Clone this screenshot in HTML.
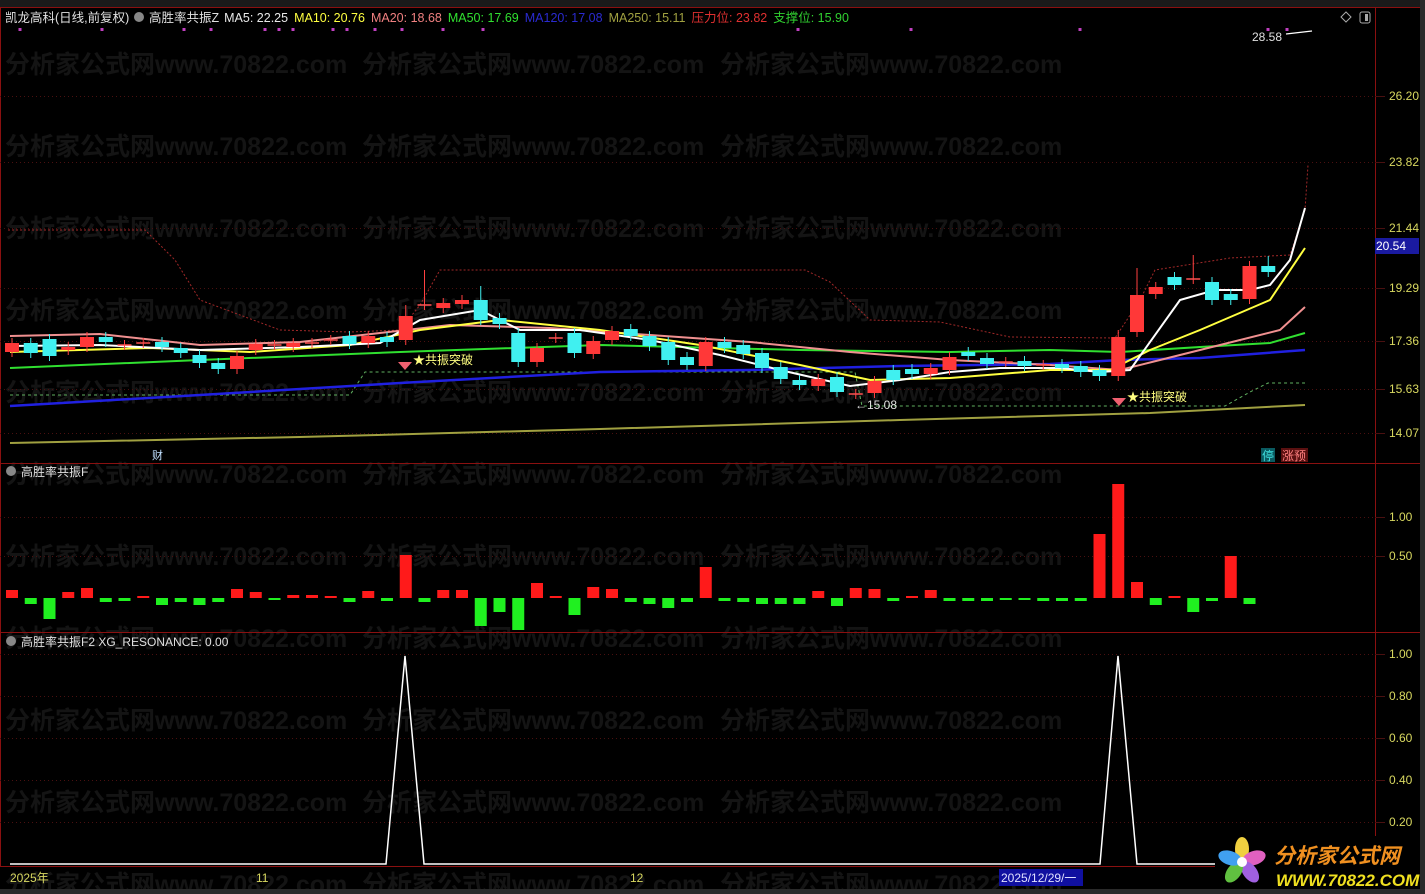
<!DOCTYPE html>
<html><head><meta charset="utf-8">
<style>
html,body{margin:0;padding:0;background:#000;width:1425px;height:894px;overflow:hidden}
svg{display:block}
text{font-family:"Liberation Sans","Noto Sans CJK SC",sans-serif}
</style></head>
<body>
<svg id="s" width="1425" height="894" xmlns="http://www.w3.org/2000/svg">
<rect width="1425" height="894" fill="#000"/>
<g id="wm" fill="#141414" font-size="25" font-weight="bold"></g>
<rect x="0" y="0" width="1425" height="7" fill="#1a1a1a"/>
<rect x="1420" y="0" width="5" height="894" fill="#2a2a2a"/>
<rect x="0" y="889" width="1425" height="5" fill="#2a2a2a"/>
<g stroke="#8a1010" stroke-width="1" fill="none">
<line x1="0" y1="7.5" x2="1420" y2="7.5"/>
<line x1="1375.5" y1="8" x2="1375.5" y2="866"/>
<line x1="0" y1="463.5" x2="1420" y2="463.5"/>
<line x1="0" y1="632.5" x2="1420" y2="632.5"/>
<line x1="0" y1="866.5" x2="1420" y2="866.5"/>
<line x1="0.5" y1="8" x2="0.5" y2="866"/>
</g>
<g id="grid" stroke="#4a1010" stroke-dasharray="1,3" stroke-width="1"></g>
<g id="axis" font-size="12" fill="#d8d860"></g>
<g id="chart"></g>
<text x="5" y="22" font-size="12.5" fill="#e0e0e0">凯龙高科(日线,前复权)</text>
<circle cx="139" cy="17" r="5" fill="#888"/>
<text x="149" y="22" font-size="12.5"><tspan fill="#e0e0e0">高胜率共振Z</tspan><tspan fill="#e8e8e8" dx="5">MA5: 22.25</tspan><tspan fill="#ffff40" dx="6">MA10: 20.76</tspan><tspan fill="#f08080" dx="6">MA20: 18.68</tspan><tspan fill="#30e030" dx="6">MA50: 17.69</tspan><tspan fill="#2a2ad0" dx="6">MA120: 17.08</tspan><tspan fill="#a0a040" dx="6">MA250: 15.11</tspan><tspan fill="#e03030" dx="6">压力位: 23.82</tspan><tspan fill="#30d030" dx="6">支撑位: 15.90</tspan></text>
<text x="1252" y="41" font-size="12" fill="#e0e0e0">28.58</text>
<path d="M1286 34 L1312 31" stroke="#fff" stroke-width="1.2"/>
<path d="M1346 12 l5 5 -5 5 -5 -5z" stroke="#aaa" fill="none"/>
<rect x="1360" y="12" width="10" height="11" rx="2" stroke="#aaa" fill="none"/><rect x="1365" y="14" width="3" height="7" fill="#aaa"/>
<circle cx="11" cy="471" r="5" fill="#888"/>
<text x="21" y="476" font-size="12" fill="#e0e0e0">高胜率共振F</text>
<circle cx="11" cy="641" r="5" fill="#888"/>
<text x="21" y="646" font-size="12" fill="#e0e0e0">高胜率共振F2  XG_RESONANCE: 0.00</text>
<text x="152" y="459" font-size="11" fill="#c0e0ff">财</text>
<rect x="1261" y="448" width="14" height="14" fill="#0a5a60"/><text x="1262" y="460" font-size="12" fill="#40e0e0">停</text>
<rect x="1281" y="448" width="27" height="14" fill="#5a1010"/><text x="1282" y="460" font-size="12" fill="#ff8080">涨预</text>
<path d="M398 362 h14 l-7 8z" fill="#f06070"/><text x="413" y="364" font-size="12" fill="#ffff80">★共振突破</text>
<path d="M1112 398 h14 l-7 8z" fill="#f06070"/><text x="1127" y="401" font-size="12" fill="#ffff80">★共振突破</text>
<text x="855" y="409" font-size="12" fill="#e0e0e0">←15.08</text>
<text x="10" y="882" font-size="12" fill="#d8d860">2025年</text>
<text x="256" y="882" font-size="12" fill="#d8d860">11</text>
<text x="630" y="882" font-size="12" fill="#d8d860">12</text>
<rect x="999" y="869" width="84" height="17" fill="#1010a0"/>
<text x="1001" y="882" font-size="12" fill="#e0e0ff">2025/12/29/一</text>
<rect x="1215" y="836" width="205" height="53" fill="#000"/>
<g transform="translate(1242,862)">
<ellipse cx="0" cy="-13" rx="7" ry="12" fill="#f0d040"/>
<ellipse cx="12" cy="-4" rx="7" ry="12" fill="#e060c0" transform="rotate(72 12 -4)"/>
<ellipse cx="8" cy="10" rx="7" ry="12" fill="#a060e0" transform="rotate(144 8 10)"/>
<ellipse cx="-8" cy="10" rx="7" ry="12" fill="#60c040" transform="rotate(216 -8 10)"/>
<ellipse cx="-12" cy="-4" rx="7" ry="12" fill="#40a0f0" transform="rotate(288 -12 -4)"/>
<circle r="5" fill="#fff"/>
</g>
<text x="1274" y="863" font-size="21" font-weight="bold" font-style="italic" fill="#f09020">分析家公式网</text>
<text x="1276" y="886" font-size="17" font-weight="bold" font-style="italic" fill="#f0e020">WWW.70822.COM</text>
</svg>
<script>
var NS="http://www.w3.org/2000/svg";
function el(p,t,a,txt){var e=document.createElementNS(NS,t);for(var k in a)e.setAttribute(k,a[k]);if(txt)e.textContent=txt;document.getElementById(p).appendChild(e);return e;}
[65,147,229,311,393,475,557,639,721,803,885].forEach(function(y){[5,362,720].forEach(function(x){el("wm","text",{x:x,y:y+8},"分析家公式网www.70822.com");});});
[[96,"26.20"],[162,"23.82"],[228,"21.44"],[288,"19.29"],[341,"17.36"],[389,"15.63"],[433,"14.07"],[517,"1.00"],[556,"0.50"],[654,"1.00"],[696,"0.80"],[738,"0.60"],[780,"0.40"],[822,"0.20"]].forEach(function(a){
 el("grid","line",{x1:0,y1:a[0]+.5,x2:1375,y2:a[0]+.5});
 el("grid","line",{x1:1375,y1:a[0]+.5,x2:1385,y2:a[0]+.5,"stroke-dasharray":"none"});
 el("axis","text",{x:1389,y:a[0]+4},a[1]);});
el("axis","rect",{x:1375,y:238,width:44,height:16,fill:"#1a1aa0"});
el("axis","text",{x:1376,y:250,fill:"#fff"},"20.54");
[20,102,184,211,265,279,293,333,347,375,402,443,483,798,911,1080,1268,1287].forEach(function(x){el("chart","rect",{x:x-1.5,y:28,width:3,height:3,fill:"#c040c0"});});
function pl(pts,c,w,d){var s=pts.map(function(p){return p.join(",")}).join(" ");var a={points:s,fill:"none",stroke:c,"stroke-width":w};if(d)a["stroke-dasharray"]=d;el("chart","polyline",a);}
pl([[8,230],[145,230],[175,260],[200,300],[280,330],[350,332],[400,330],[420,305],[440,270],[805,270],[830,282],[870,320],[940,322],[1010,337],[1115,338],[1140,300],[1155,270],[1230,258],[1290,255],[1305,210],[1308,165]],"#a02828",1,"2,2");
pl([[10,395],[350,395],[365,372],[855,372],[862,406],[1225,406],[1250,392],[1268,383],[1305,383]],"#60b060",1,"3,3");
pl([[10,443],[300,437],[600,429],[900,420],[1150,413],[1305,405]],"#a0a040",2);
pl([[10,406],[200,395],[400,383],[600,372],[750,370],[900,366],[1050,364],[1120,360],[1200,358],[1305,350]],"#2020e0",2.5);
pl([[10,368],[200,360],[400,352],[600,345],[800,350],[950,352],[1050,350],[1120,352],[1200,347],[1270,343],[1305,333]],"#30e030",2);
pl([[10,336],[100,334],[200,345],[300,342],[380,333],[450,325],[550,328],[650,335],[750,342],[850,352],[950,360],[1050,365],[1120,370],[1160,360],[1220,345],[1280,330],[1305,307]],"#f09090",2);
pl([[10,352],[150,348],[250,352],[350,345],[420,330],[500,320],[600,330],[700,345],[800,365],[870,380],[950,378],[1050,370],[1110,370],[1150,350],[1200,330],[1270,300],[1305,248]],"#ffff40",2);
pl([[10,346],[100,345],[200,350],[300,347],[380,343],[420,320],[480,310],[520,330],[580,330],[650,340],[720,355],[780,370],[850,386],[900,380],[950,372],[1000,368],[1060,368],[1100,372],[1130,370],[1180,300],[1215,290],[1250,290],[1270,285],[1290,260],[1305,208]],"#ffffff",2);
var C=[["r",343,352],["c",343,353],["c",339,356],["r",347,350],["r",337,347],["c",337,342],["x",345,345],["x",343,343],["c",342,347],["c",348,353],["c",355,363],["c",363,369],["r",356,369],["r",344,350],["x",345,345],["r",343,347],["x",343,343],["x",340,340],["c",336,344],["r",336,343],["c",337,342],["r",316,340],["x",305,305],["r",303,308],["r",300,304],["c",300,320],["c",318,324],["c",333,362],["r",348,362],["x",338,338],["c",333,353],["r",341,354],["r",331,340],["c",329,336],["c",336,346],["c",342,360],["c",357,365],["r",342,366],["c",342,348],["c",345,354],["c",353,368],["c",367,379],["c",380,385],["r",379,386],["c",377,392],["x",394,394],["r",381,393],["c",370,380],["c",369,374],["r",368,374],["r",357,370],["c",352,356],["c",358,364],["x",362,362],["c",361,366],["x",365,365],["c",364,368],["c",366,372],["c",370,376],["r",337,376],["r",295,332],["r",287,294],["c",277,285],["x",279,279],["c",282,300],["c",294,300],["r",266,299],["c",266,272]];
var wickTop={22:270,25:286,60:268,63:255,67:256,59:330,21:305,27:328};
C.forEach(function(c,i){var x=12+i*18.75;var col=c[0]=="r"?"#ff3838":(c[0]=="c"?"#40f0f0":"#ff5050");
 var wt=wickTop[i]||c[1]-5, wb=c[2]+5;
 el("chart","line",{x1:x,y1:wt,x2:x,y2:wb,stroke:c[0]=="c"?"#40f0f0":"#ff4040","stroke-width":1});
 if(c[0]=="x")el("chart","line",{x1:x-7,y1:c[1],x2:x+7,y2:c[1],stroke:col,"stroke-width":1.5});
 else el("chart","rect",{x:x-7,y:c[1],width:14,height:Math.max(2,c[2]-c[1]),fill:col});
});
var B=[590,604,619,592,588,602,601,596,605,602,605,602,589,592,599,595,595,596,602,591,601,555,602,590,590,626,612,630,583,596,615,587,589,602,604,608,602,567,601,602,604,604,604,591,606,588,589,601,596,590,601,601,601,599,599,601,601,601,534,484,582,605,596,612,601,556,604];
B.forEach(function(v,i){var x=12+i*18.75;var r=v<598;el("chart","rect",{x:x-6,y:r?v:598,width:12,height:Math.max(2,Math.abs(v-598)),fill:r?"#ff1a1a":"#20f020"});});
pl([[10,864],[386,864],[405,656],[424,864],[1100,864],[1118,656],[1137,864],[1225,864]],"#ffffff",1.5);
</script>
</body></html>
